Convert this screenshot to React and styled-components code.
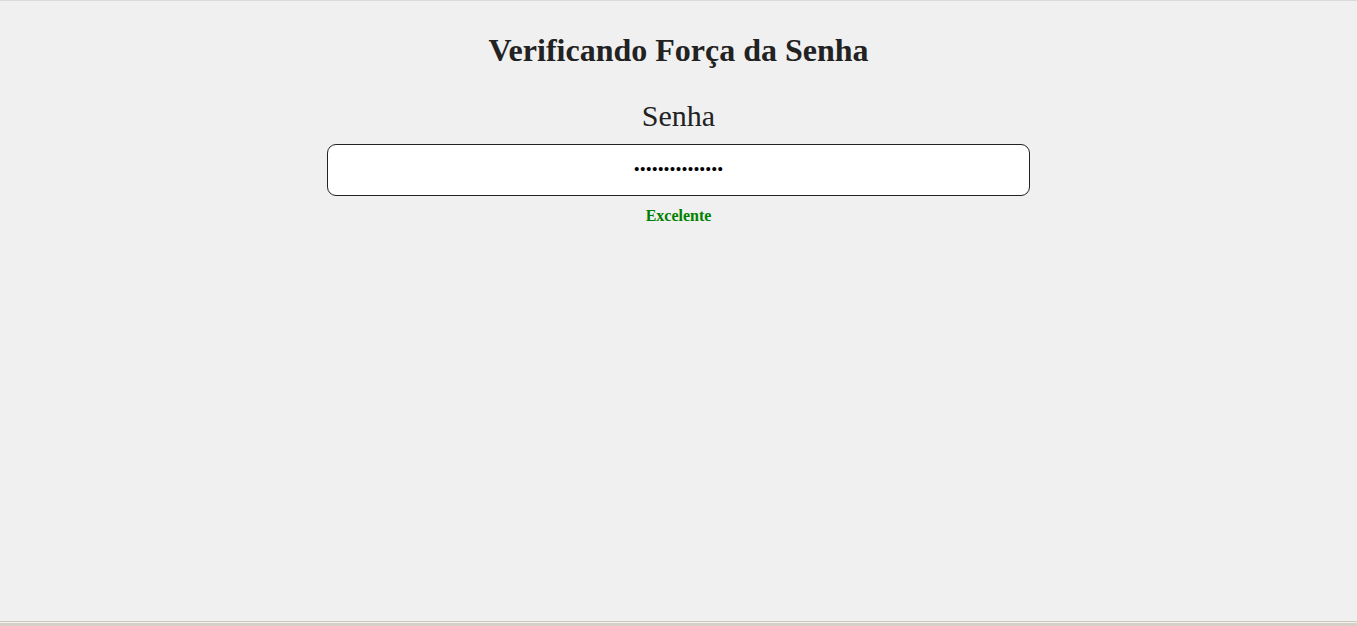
import React, { useState, useRef, useEffect } from 'react';
import styled, { createGlobalStyle } from 'styled-components';

const GlobalStyle = createGlobalStyle`
  html, body {
    margin: 0;
    padding: 0;
    background: #f0f0f0;
  }
  body {
    font-family: "Liberation Serif", "Times New Roman", serif;
    color: #222;
  }
`;

const Page = styled.div`
  height: 626px;
  box-sizing: border-box;
  display: flex;
  flex-direction: column;
  border-top: 1px solid #dadada;
`;

const Main = styled.main`
  flex: 1;
  display: flex;
  flex-direction: column;
  align-items: center;
  padding-top: 31px;
`;

const Title = styled.h1`
  margin: 0;
  font-size: 32px;
  font-weight: 700;
  line-height: 37px;
  color: #222;
`;

const Label = styled.label`
  margin-top: 29px;
  font-size: 30px;
  line-height: 35px;
  color: #222;
`;

const PasswordInput = styled.input`
  margin-top: 11px;
  width: 703px;
  height: 52px;
  box-sizing: border-box;
  border: 1px solid #222;
  border-radius: 9px;
  background: #fff;
  text-align: center;
  font-family: "Liberation Serif", "Times New Roman", serif;
  font-size: 17px;
  color: #000;
  outline: none;
  caret-color: #000;
`;

const Strength = styled.p`
  margin: 11px 0 0;
  font-size: 16px;
  font-weight: 700;
  line-height: 18px;
  color: ${(p) => p.$color};
`;

const Frame = styled.div`
  height: 5px;
  border-top: 1px solid #cbc7bf;
  box-sizing: border-box;
  display: flex;
  flex-direction: column;
  &::before {
    content: '';
    height: 1px;
    background: #f4f2ee;
  }
  &::after {
    content: '';
    flex: 1;
    background: #d4d0c8;
  }
`;

function rate(pw) {
  let score = 0;
  if (pw.length >= 8) score++;
  if (/[A-Z]/.test(pw)) score++;
  if (/[0-9]/.test(pw)) score++;
  if (/[^A-Za-z0-9]/.test(pw)) score++;
  if (pw.length >= 12) score++;
  if (score >= 4) return { text: 'Excelente', color: '#008000' };
  if (score >= 3) return { text: 'Boa', color: '#2e8b57' };
  if (score >= 2) return { text: 'Média', color: '#d98c00' };
  return { text: 'Fraca', color: '#c00' };
}

export default function App() {
  const [password, setPassword] = useState('Senha@Forte2024');
  const inputRef = useRef(null);
  const strength = rate(password);

  useEffect(() => {
    const el = inputRef.current;
    if (el) {
      el.focus();
      el.setSelectionRange(password.length, password.length);
    }
  }, []);

  return (
    <>
      <GlobalStyle />
      <Page>
        <Main>
          <Title>Verificando Força da Senha</Title>
          <Label htmlFor="senha">Senha</Label>
          <PasswordInput
            id="senha"
            ref={inputRef}
            type="password"
            value={password}
            onChange={(e) => setPassword(e.target.value)}
          />
          <Strength $color={strength.color}>{strength.text}</Strength>
        </Main>
        <Frame />
      </Page>
    </>
  );
}
